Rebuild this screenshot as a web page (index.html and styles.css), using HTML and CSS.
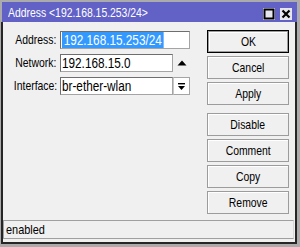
FILE: index.html
```html
<!DOCTYPE html>
<html lang="en">
<head>
    <meta charset="UTF-8">
    <meta name="viewport" content="width=device-width, initial-scale=1.0">
    <title>Address</title>
    <link rel="stylesheet" href="styles.css">
</head>
<body>
<div class="window">
    <div class="titlebar">
        <span class="title txt">Address &lt;192.168.15.253/24&gt;</span>
        <span class="title-buttons">
            <span class="tbtn">
                <svg width="12" height="12" viewBox="0 0 12 12"><rect x="1.5" y="1.5" width="9" height="9" fill="none" stroke="#000" stroke-width="2"/></svg>
            </span>
            <span class="tbtn">
                <svg width="12" height="12" viewBox="0 0 12 12"><path d="M2.5 2.5 L9.5 9.5 M9.5 2.5 L2.5 9.5" stroke="#000" stroke-width="2.2"/></svg>
            </span>
        </span>
    </div>
    <div class="body">
        <div class="main">
            <div class="form">
                <label class="label"><span class="txt right">Address:</span></label>
                <div class="field"><span class="input"><span class="selected txt">192.168.15.253/24</span></span></div>

                <label class="label"><span class="txt right">Network:</span></label>
                <div class="field">
                    <span class="input"><span class="txt">192.168.15.0</span></span>
                    <span class="arrow">
                        <svg width="10" height="6" viewBox="0 0 10 6"><path d="M0.5 5.5 L5 0.5 L9.5 5.5 Z" fill="#000"/></svg>
                    </span>
                </div>

                <label class="label"><span class="txt right">Interface:</span></label>
                <div class="field">
                    <span class="input"><span class="txt">br-ether-wlan</span></span>
                    <span class="dropdown">
                        <svg width="9" height="9" viewBox="0 0 9 9"><rect x="1" y="1" width="7" height="1.4" fill="#000"/><path d="M1 4 L8 4 L4.5 8 Z" fill="#000"/></svg>
                    </span>
                </div>
            </div>
            <div class="actions">
                <button class="button default"><span class="txt mid">OK</span></button>
                <button class="button"><span class="txt mid">Cancel</span></button>
                <button class="button"><span class="txt mid">Apply</span></button>
                <button class="button spaced"><span class="txt mid">Disable</span></button>
                <button class="button"><span class="txt mid">Comment</span></button>
                <button class="button"><span class="txt mid">Copy</span></button>
                <button class="button"><span class="txt mid">Remove</span></button>
            </div>
        </div>
        <div class="status"><span class="txt">enabled</span></div>
    </div>
</div>
</body>
</html>
```

FILE: styles.css
```css
/* General styles */
body {
    margin: 0;
    padding: 0;
    font-family: "Liberation Sans", Arial, sans-serif;
    font-size: 13px;
    background-color: #ababab;
}

/* narrow text, the screenshot font is condensed */
.txt {
    display: inline-block;
    white-space: nowrap;
    transform: scaleX(0.8);
    transform-origin: left center;
}

.txt.right {
    transform-origin: right center;
}

.txt.mid {
    transform-origin: center center;
}

/* Window frame */
.window {
    width: 300px;
    height: 247px;
    box-sizing: border-box;
    padding: 2px 3px 0 1px;
    background-color: #ababab;
}

.titlebar {
    height: 20px;
    margin-left: 1px;
    background-color: #6262c6;
    color: #ffffff;
    display: flex;
    align-items: center;
    justify-content: space-between;
    padding: 0 5px 0 6px;
}

.title {
    font-size: 13px;
    padding-top: 1px;
}

.title-buttons {
    display: flex;
    gap: 5px;
    margin-top: 3px;
}

.tbtn {
    width: 12px;
    height: 12px;
    background-color: #e6e6ee;
    display: flex;
    align-items: center;
    justify-content: center;
}

/* Body */
.body {
    height: 222px;
    box-sizing: border-box;
    background-color: #f0f0f0;
    border: 2px solid #262626;
    border-top: none;
    display: flex;
    flex-direction: column;
}

.main {
    flex: 1;
    display: flex;
    padding: 8px 6px 0 0;
}

/* Form */
.form {
    flex: 1;
    display: grid;
    grid-template-columns: 53px 130px;
    grid-auto-rows: 18px;
    row-gap: 5px;
    column-gap: 4px;
    align-content: start;
    padding-top: 1px;
}

.label {
    text-align: right;
    line-height: 18px;
    color: #000;
}

.field {
    display: flex;
}

.input {
    flex: 1;
    background-color: #ffffff;
    border: 1px solid #a4a4a4;
    border-top-color: #6e6e6e;
    border-left-color: #6e6e6e;
    padding: 0 1px;
    line-height: 16px;
    font-size: 14px;
    overflow: hidden;
}

.input .txt {
    transform: scaleX(0.84);
}

.selected {
    background-color: #3399ff;
    color: #ffffff;
    padding: 0 2px;
}

.arrow {
    width: 17px;
    display: flex;
    align-items: center;
    justify-content: center;
}

.dropdown {
    width: 15px;
    background-color: #ffffff;
    border: 1px solid #a4a4a4;
    border-left: 1px solid #c8c8c8;
    display: flex;
    align-items: center;
    justify-content: center;
}

/* Buttons */
.actions {
    width: 82px;
    display: flex;
    flex-direction: column;
    gap: 3px;
}

.button {
    height: 23px;
    padding: 0;
    font-family: inherit;
    font-size: 13px;
    color: #000;
    background-color: #f0f0f0;
    border: 1px solid #9c9c9c;
    box-shadow: inset 1px 1px 0 #ffffff;
}

.default {
    border: 1px solid #000;
    box-shadow: inset 0 0 0 1px #9c9c9c, inset 2px 2px 0 #ffffff;
}

.spaced {
    margin-top: 5px;
}

/* Status bar */
.status {
    height: 19px;
    margin: 0 1px 3px 0;
    box-sizing: border-box;
    border: 1px solid #a0a0a0;
    border-right-color: #d8d8d8;
    padding: 0 2px;
    line-height: 17px;
    font-size: 13px;
}

.status .txt {
    transform: scaleX(0.84);
}
```
